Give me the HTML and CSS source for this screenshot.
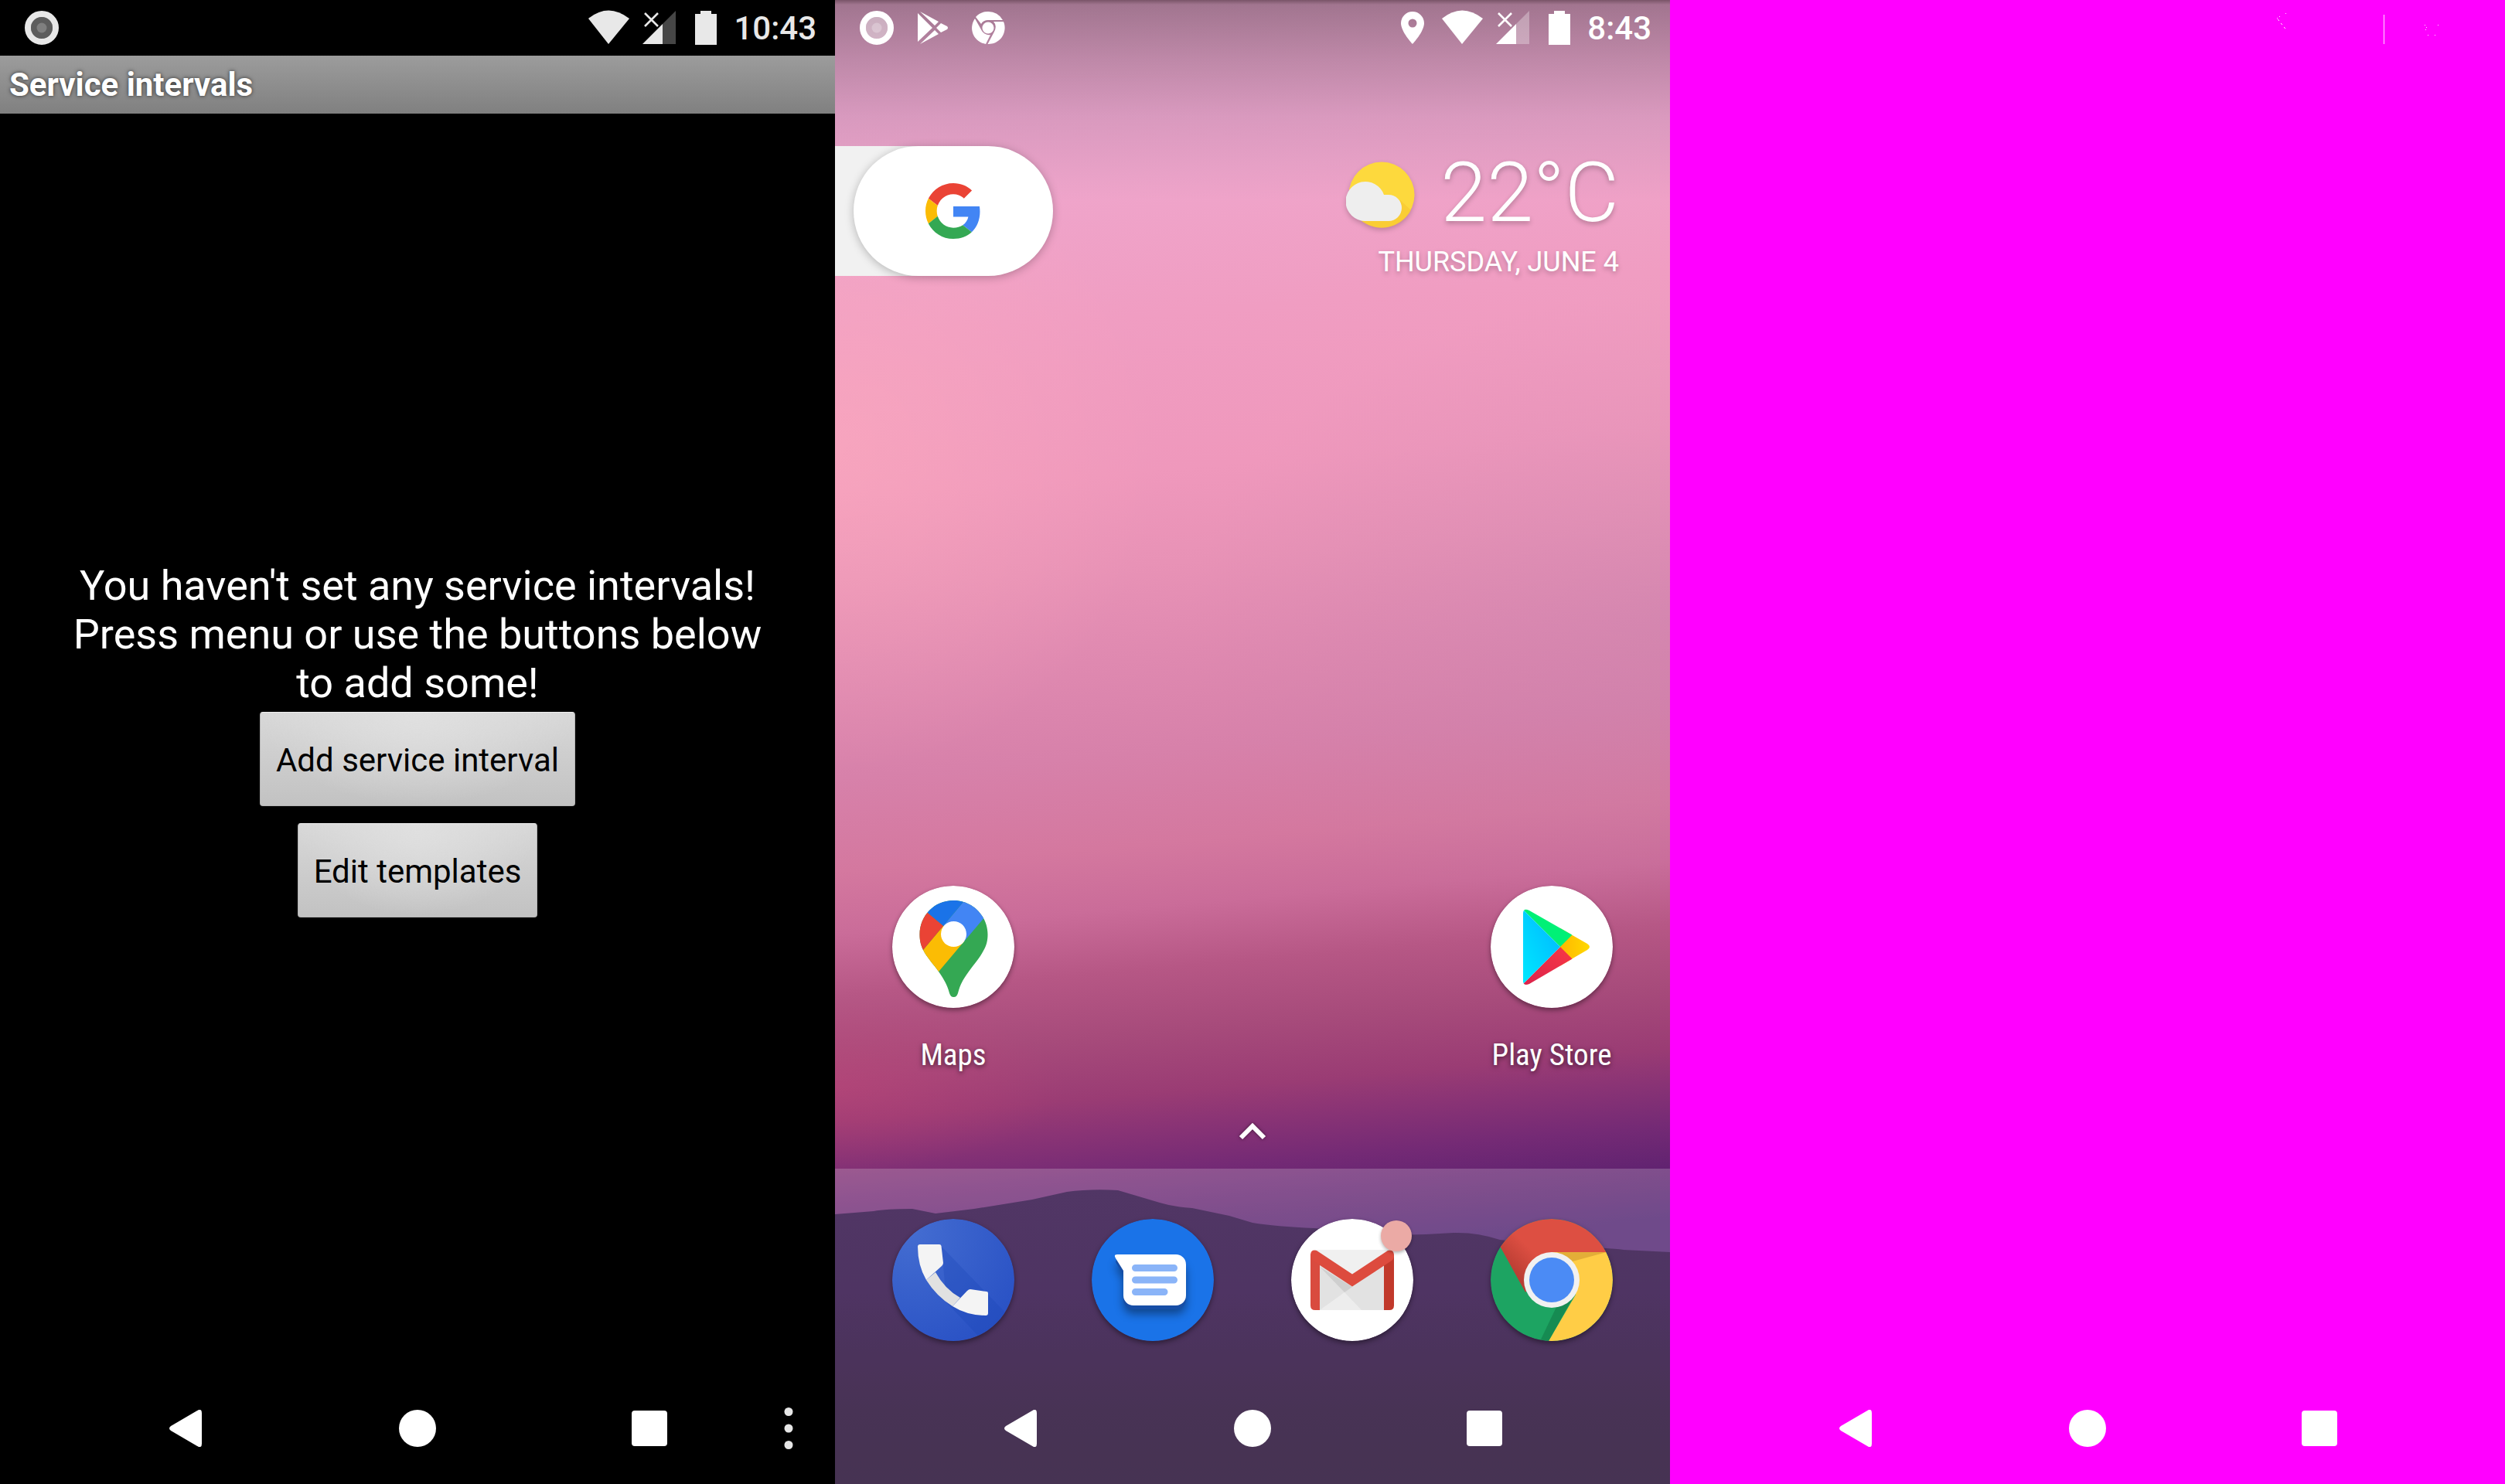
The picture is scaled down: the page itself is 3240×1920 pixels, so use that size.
FILE: index.html
```html
<!DOCTYPE html>
<html lang="en">
<head>
<meta charset="utf-8">
<title>Service intervals</title>
<link rel="stylesheet" href="styles.css">
</head>
<body>
<svg class="defs" aria-hidden="true">
  <defs>
    <symbol id="wifi" viewBox="0 0 54 48"><path d="M0 12Q26 -9 53 12L26 45Z"/></symbol>
    <symbol id="signal" viewBox="0 0 48 48"><path d="M43 2V45H26V19Z" opacity=".3"/><path d="M0 45L26 19V45Z"/><path d="M3 5L20 22M20 5L3 22" stroke="currentColor" stroke-width="2.6" fill="none"/></symbol>
    <symbol id="battery" viewBox="0 0 36 48"><path d="M11 2H25V6H32V46H4V6H11Z"/></symbol>
    <symbol id="record" viewBox="0 0 48 48"><circle cx="24" cy="24" r="18" fill="none" stroke="currentColor" stroke-width="8"/><circle cx="24" cy="24" r="14" opacity=".4"/><circle cx="24" cy="24" r="6.500" class="record-core"/></symbol>
    <symbol id="back" viewBox="0 0 48 48"><path d="M41 0Q45 -1 45 4V44Q45 49 41 48L5 27Q1 24 5 21Z"/></symbol>
    <symbol id="home" viewBox="0 0 48 48"><circle cx="24" cy="24" r="24"/></symbol>
    <symbol id="recents" viewBox="0 0 48 48"><rect x="1" y="1" width="46" height="46" rx="4"/></symbol>
  </defs>
</svg>
<main class="screens">

  <section class="phone app">
    <header class="status">
      <svg class="i48"><use href="#record"/></svg>
      <div class="status-right">
        <svg class="i54"><use href="#wifi"/></svg>
        <svg class="i48"><use href="#signal"/></svg>
        <svg class="i36"><use href="#battery"/></svg>
        <time>10:43</time>
      </div>
    </header>
    <h1 class="title">Service intervals</h1>
    <div class="empty">
      <p>You haven't set any service intervals! Press menu or use the buttons below to add some!</p>
      <div class="actions">
        <button class="btn">Add service interval</button>
        <button class="btn">Edit templates</button>
      </div>
    </div>
    <nav class="nav">
      <button aria-label="Back"><svg class="i48"><use href="#back"/></svg></button>
      <button aria-label="Home"><svg class="i48"><use href="#home"/></svg></button>
      <button aria-label="Recents"><svg class="i48"><use href="#recents"/></svg></button>
      <button class="more" aria-label="Menu"><svg viewBox="0 0 12 54"><circle cx="6" cy="5.500" r="5.500"/><circle cx="6" cy="27" r="5.500"/><circle cx="6" cy="48.500" r="5.500"/></svg></button>
    </nav>
  </section>

  <section class="phone launcher">
    <svg class="hills" viewBox="0 0 1080 390" preserveAspectRatio="none" aria-hidden="true">
      <defs><linearGradient id="hill" x2="0" y2="1"><stop offset="0" stop-color="#26043f"/><stop offset=".35" stop-color="#23023c"/><stop offset=".75" stop-color="#1b002b"/><stop offset="1" stop-color="#180028"/></linearGradient></defs>
      <path fill="url(#hill)" d="M0 41L50 37Q65 34 100 34L130 40L180 34L255 22L300 12Q330 8 366 10L420 26Q440 32 462 33L510 43L540 52Q570 57 620 59L720 68Q760 68 800 65Q830 64 860 74L950 84Q1000 84 1020 87L1080 90V390H0Z"/>
    </svg>
    <header class="status">
      <svg class="i48"><use href="#record"/></svg>
      <svg class="i48" viewBox="0 0 48 48"><path d="M5 5V42L24 24ZM8 3L27 21L32 16ZM8 45L27 27L32 32ZM35 18L29 24L35 30L43 26Q45 24 43 22Z"/></svg>
      <svg class="i48" viewBox="0 0 48 48"><path d="M24 3A21 21 0 0 1 43 14H24A10 10 0 0 0 15 19L8 10A21 21 0 0 1 24 3ZM44 16A21 21 0 0 1 23.500 45L32 29Q36 21 31 16ZM7 12L16 28Q20 34 27 33L21 45A21 21 0 0 1 7 12Z"/><circle cx="24" cy="24" r="7.500"/></svg>
      <div class="status-right">
        <svg class="i44" viewBox="0 0 44 48"><path fill-rule="evenodd" d="M22 3A15 15 0 0 0 7 18C7 29 22 45 22 45S37 29 37 18A15 15 0 0 0 22 3ZM22 12.500A5.500 5.500 0 1 1 22 23.500A5.500 5.500 0 1 1 22 12.500Z"/></svg>
        <svg class="i54"><use href="#wifi"/></svg>
        <svg class="i48"><use href="#signal"/></svg>
        <svg class="i36"><use href="#battery"/></svg>
        <time>8:43</time>
      </div>
    </header>

    <div class="widgets">
      <div class="search">
        <button class="pill" aria-label="Google search">
          <svg viewBox="0 0 48 48"><path fill="#4285f4" d="M46.980 24.550c0-1.570-.15-3.090-.38-4.550H24v9.020h12.940c-.58 2.960-2.260 5.480-4.780 7.180l7.730 6c4.510-4.180 7.090-10.360 7.090-17.650z"/><path fill="#ea4335" d="M24 9.500c3.540 0 6.710 1.220 9.210 3.600l6.850-6.850C35.900 2.380 30.470 0 24 0 14.620 0 6.510 5.380 2.560 13.220l7.980 6.190C12.430 13.720 17.740 9.500 24 9.500z"/><path fill="#fbbc05" d="M10.530 28.590c-.48-1.450-.76-2.990-.76-4.590s.27-3.140.76-4.590l-7.980-6.190C.92 16.460 0 20.120 0 24c0 3.880.92 7.540 2.560 10.780l7.970-6.190z"/><path fill="#34a853" d="M24 48c6.480 0 11.930-2.130 15.890-5.810l-7.730-6c-2.150 1.450-4.920 2.300-8.160 2.300-6.260 0-11.570-4.220-13.470-9.910l-7.980 6.190C6.510 42.620 14.620 48 24 48z"/></svg>
        </button>
      </div>
      <div class="weather">
        <div class="temp">
          <svg viewBox="0 0 92 92" aria-hidden="true"><circle cx="46" cy="49" r="42.500" fill="#fdd93d"/><path d="M70 56L84 69A43 43 0 0 1 20 83L58 81Z" fill="#f9c52f" opacity=".6"/><path fill="#eee" d="M24 83A25.500 25.500 0 1 1 49 49H55A17 17 0 0 1 55 83Z"/></svg>
          <span>22°C</span>
        </div>
        <div class="date">THURSDAY, JUNE 4</div>
      </div>
    </div>

    <div class="icons shortcuts">
      <a class="shortcut" href="#maps">
        <svg class="icon" viewBox="0 0 158 158"><defs><clipPath id="pin"><path d="M79.500 19C54 19 35.500 39 35.500 63C35.500 72 37.500 78 40 83C45 93 53 101 60 111C67 121 71 128 74 139C75 142 76.500 144 79.500 144S84 142 85 139C88 127 92 121 99 111C106 101 113 94 118 84C122 77 123.500 71 123.500 63C123.500 39 104 19 79.500 19Z"/></clipPath></defs><circle cx="79" cy="79" r="79" fill="#fff"/><g clip-path="url(#pin)"><path fill="#34a853" d="M0 0H158V158H0Z"/><path fill="#fbbc04" d="M30 95L66 52L79 62L93 72L50 123Z"/><path fill="#4285f4" d="M101 10L66 52L79 62L93 72L126 33L115 10Z"/><path fill="#1a73e8" d="M28 20L66 52L101 10H30Z"/><path fill="#ea4335" d="M28 20L66 52L30 95L20 95Z"/></g><circle cx="79.500" cy="62.500" r="16.500" fill="#fff"/></svg>
        <span>Maps</span>
      </a>
      <a class="shortcut last" href="#play">
        <svg class="icon" viewBox="0 0 158 158"><defs><linearGradient id="cyan" x1="1" x2="0" y2="1"><stop stop-color="#00b4ff"/><stop offset="1" stop-color="#00eaff"/></linearGradient><linearGradient id="amber"><stop stop-color="#ffb700"/><stop offset="1" stop-color="#ffdc00"/></linearGradient><linearGradient id="ruby" x1="1" x2="0" y2="1"><stop stop-color="#ff3a44"/><stop offset="1" stop-color="#d31f4d"/></linearGradient><clipPath id="tri"><path d="M42 36Q42 28 50 32L125 75Q131 79 125 83L50 127Q42 130 42 123Z"/></clipPath></defs><circle cx="79" cy="79" r="79" fill="#fff"/><g clip-path="url(#tri)"><path fill="url(#amber)" d="M90 40H132V118H90Z"/><path fill="#00f076" d="M40 29L90 79L130 39L60 10Z"/><path fill="url(#ruby)" d="M40 129L90 79L130 119L60 148Z"/><path fill="url(#cyan)" d="M40 29L90 79L40 129Z"/></g></svg>
        <span>Play Store</span>
      </a>
    </div>
    <button class="drawer" aria-label="All apps"><svg viewBox="0 0 40 28"><path d="M5 22L20 7L35 22"/></svg></button>

    <footer class="hotseat">
      <div class="icons dock">
        <button aria-label="Phone"><svg class="icon" viewBox="0 0 158 158"><defs><radialGradient id="ph" cx=".15" cy=".1" r="1.100"><stop stop-color="#446dd1"/><stop offset="1" stop-color="#2850c4"/></radialGradient></defs><circle cx="79" cy="79" r="79" fill="url(#ph)"/><path d="M64 36L146 121A79 79 0 0 1 111 151L70 108Z" fill="#1c45b5" opacity=".3"/><path fill="#e1e1e1" d="M56 69Q68 91 88 102L78 113Q57 100 44 79Z"/><path fill="#f4f4f4" d="M33 36Q33 33 36 33H61Q63 33 63.500 35L66 57Q66 59 64 61L44 79Q33 60 33 36ZM78 113L97 93Q99 91 101 91L122 94Q124 94 124 96V122Q124 125 121 125Q97 125 78 113Z"/></svg></button>
        <button aria-label="Messages"><svg class="icon" viewBox="0 0 158 158"><circle cx="79" cy="79" r="79" fill="#1a73e8"/><path class="bubble-shadow" fill="#174ea6" d="M32 52H109A13 13 0 0 1 122 65V104A13 13 0 0 1 109 117H54A13 13 0 0 1 41 104V73L31 56Z"/><path fill="#fff" d="M33 46H109A13 13 0 0 1 122 59V99A13 13 0 0 1 109 112H54A13 13 0 0 1 41 99V67L31 51Q28 46 33 46Z"/><path d="M56.500 63.500H106.500M56.500 79H106.500M56.500 94.500H94" stroke="#8ab4f8" stroke-width="9" stroke-linecap="round"/></svg></button>
        <button aria-label="Gmail, new mail"><svg class="icon" viewBox="0 0 158 158"><circle cx="79" cy="79" r="79" fill="#fff"/><path fill="#e2e2e2" d="M31 40H126V118H31Z"/><path fill="#f0f0f0" d="M31 40H126L79 74Z"/><path fill="#cfcfcf" d="M37 62L79 88L69 95Z"/><path fill="#ededed" d="M37 118L69 95L91 118Z"/><path fill="#d94b3f" d="M25 46L37 56V118H31Q25 118 25 112Z"/><path fill="#c1392b" d="M133 46L120 56V118H127Q133 118 133 112Z"/><path fill="#dd4b3e" d="M25 46Q26 39 33 41L79 71.500L125 41Q132 39 133 46Q133 52 130 54L79 87.500L28 54Q25 52 25 46Z"/></svg><i class="badge"></i></button>
        <button aria-label="Chrome"><svg class="icon" viewBox="0 0 158 158"><defs><clipPath id="disc"><circle cx="79" cy="79" r="79"/></clipPath><linearGradient id="cr" x1=".35" x2=".1" y1=".45" y2=".6"><stop stop-color="#dd4f42"/><stop offset="1" stop-color="#b93d33"/></linearGradient></defs><g clip-path="url(#disc)"><path fill="#1da462" d="M0 0H158V158H0Z"/><path fill="url(#cr)" d="M13 37L0 14V0H158V43H79L45 95Z"/><path fill="#ffcd46" d="M79 43H158V158H75L110 98Z"/><path fill="#e3ae38" d="M86 43H150L106 55Z"/><path fill="#14804c" d="M108 99L75 158H64L85 114Z" opacity=".7"/></g><circle cx="79" cy="79" r="36" fill="#f1f1f1"/><circle cx="79" cy="79" r="29" fill="#4b8bf5"/></svg></button>
      </div>
      <nav class="nav">
        <button aria-label="Back"><svg class="i48"><use href="#back"/></svg></button>
        <button aria-label="Home"><svg class="i48"><use href="#home"/></svg></button>
        <button aria-label="Recents"><svg class="i48"><use href="#recents"/></svg></button>
      </nav>
    </footer>
  </section>

  <section class="phone blank">
    <header class="status">
      <svg class="specks" viewBox="0 0 216 72" shape-rendering="crispEdges" aria-hidden="true"><path d="M16 17h1v1h-1zM8 21h1v1h-1zM5 23h1v1h-1zM6 25h1v1h-1zM7 26h1v1h-1zM10 30h1v1h-1zM11 31h1v1h-1zM14 35h1v1h-1zM15 36h1v1h-1zM143 19h1v38h-1zM196 32h1v1h-1zM198 35h1v1h-1zM197 38h1v1h-1zM200 45h1v1h-1zM209 45h1v1h-1zM213 32h1v1h-1z"/></svg>
    </header>
    <nav class="nav">
      <button aria-label="Back"><svg class="i48"><use href="#back"/></svg></button>
      <button aria-label="Home"><svg class="i48"><use href="#home"/></svg></button>
      <button aria-label="Recents"><svg class="i48"><use href="#recents"/></svg></button>
    </nav>
  </section>

</main>
</body>
</html>
```
FILE: styles.css
```css
* { box-sizing: border-box; }
body { margin: 0; background: #000; font-family: Roboto, sans-serif; color: #fff; }
svg { display: block; fill: currentColor; flex: none; }
button { border: 0; padding: 0; background: none; color: inherit; font: inherit; }
a { color: inherit; text-decoration: none; }

.defs { position: absolute; width: 0; height: 0; }
.screens { display: grid; grid-template-columns: repeat(3, 1fr); min-height: 100vh; }
.phone { position: relative; display: flex; flex-direction: column; }

.i36 { width: 36px; height: 48px; }
.i44 { width: 44px; height: 48px; }
.i48 { width: 48px; height: 48px; }
.i54 { width: 54px; height: 48px; }

/* Status bar */
.status { display: flex; align-items: center; gap: 24px; height: 72px; padding: 0 24px 0 30px; flex: none; }
.status-right { display: flex; align-items: center; gap: 16px; margin-left: auto; }
.status time { padding: 2px 0 0 2px; font-size: 42px; font-weight: 500; line-height: 48px; }

/* Navigation bar */
.nav { position: relative; display: flex; align-items: center; justify-content: center; gap: 252px; height: 144px; flex: none; margin-top: auto; }
.more { position: absolute; right: 54px; color: #e6e6e6; }
.more svg { width: 12px; height: 54px; }

/* Service intervals app */
.app { background: #000; }
.app .status { color: #e8e8e8; }
.record-core { opacity: .25; }
.app .record-core { fill: #000; opacity: .5; }
.title { margin: 0; padding: 0 12px; height: 75px; line-height: 75px; font-size: 42px; font-weight: 700; background: linear-gradient(#9c9c9c, #808080); text-shadow: 0 0 5px rgba(0, 0, 0, .7); }
.empty { flex: 1; display: flex; flex-direction: column; align-items: center; justify-content: center; padding: 0 72px; text-align: center; }
.empty p { margin: 0; font-size: 54px; line-height: 63px; }
.actions { display: flex; flex-direction: column; align-items: center; gap: 22px; padding: 6px 0 10px; }
.btn { height: 122px; padding: 2px 20px 0; font-size: 42px; color: #000; border: 1px solid #b4b4b4; border-top-color: #f0f0f0; border-radius: 4px; background: radial-gradient(ellipse at 50% 0, #e0e0e0, rgba(214, 214, 214, 0) 70%), linear-gradient(#d8d8d8, #c2c2c2); }

/* Launcher */
.launcher { background:
  linear-gradient(rgba(60, 40, 50, .65), rgba(60, 50, 60, .42) 6px, rgba(70, 60, 75, .28) 76px, rgba(90, 80, 110, .14) 150px, transparent 260px),
  radial-gradient(ellipse 420px 420px at 0 580px, rgba(255, 175, 190, .5), rgba(255, 175, 190, .2) 55%, transparent),
  radial-gradient(ellipse 620px 420px at 1080px 800px, rgba(190, 130, 175, .3), transparent),
  radial-gradient(ellipse 300px 110px at 0 1405px, rgba(200, 70, 120, .4), transparent),
  linear-gradient(175deg, #eaa6cc 0, #efa5cb 13%, #f09dc2 22%, #ef98bc 32%, #e892b6 38%, #df89b0 44%, #d781aa 50%, #d4789f 56%, #ca6c99 60%, #b65785 64%, #a74b7b 68%, #9a3c74 72%, #8b3475 74%, #742a75 77%, #5f2270 80%, #4b1d6d 83%); }
.hills { position: absolute; left: 0; bottom: 0; width: 100%; height: 390px; }
.launcher .status, .launcher .widgets, .icons, .hotseat { position: relative; }
.widgets { display: flex; justify-content: space-between; padding: 117px 66px 0 0; }
.search { height: 168px; padding-left: 24px; background: linear-gradient(#f1f1f1, #f1f1f1) 0 0 / 110px 100% no-repeat; }
.pill { display: flex; align-items: center; justify-content: center; width: 258px; height: 168px; border-radius: 84px; background: #fff; box-shadow: 0 2px 12px rgba(0, 0, 0, .25); }
.pill svg { width: 72px; height: 72px; }
.weather { text-align: right; text-shadow: 0 3px 6px rgba(0, 0, 0, .25); }
.temp { display: flex; align-items: center; justify-content: flex-end; gap: 30px; font-size: 108px; font-weight: 300; line-height: 120px; }
.temp svg { width: 92px; height: 92px; filter: drop-shadow(0 3px 3px rgba(0, 0, 0, .2)); }
.date { margin-top: 6px; font-size: 36px; line-height: 48px; }

.icons { display: grid; grid-template-columns: repeat(4, 1fr); justify-items: center; padding: 0 24px; }
.icon { width: 158px; height: 158px; border-radius: 50%; box-shadow: 0 3px 6px rgba(0, 0, 0, .4); }
.shortcuts { margin-top: auto; }
.shortcut { display: flex; flex-direction: column; align-items: center; gap: 36px; font-family: "Roboto Condensed", Roboto, sans-serif; font-size: 39px; line-height: 50px; text-shadow: 0 2px 6px rgba(0, 0, 0, .6); white-space: nowrap; }
.last { grid-column: 4; }
.drawer { position: relative; display: flex; align-items: center; justify-content: center; align-self: center; width: 120px; height: 96px; margin-top: 26px; }
.drawer svg { width: 40px; height: 28px; fill: none; stroke: #fff; stroke-width: 6px; filter: drop-shadow(0 0 2px rgba(0, 0, 0, .5)); }

.hotseat { background: rgba(255, 255, 255, .2); }
.dock { padding-top: 65px; padding-bottom: 41px; }
.dock button { position: relative; }
.bubble-shadow { filter: drop-shadow(0 6px 6px rgba(0, 0, 0, .4)); }
.badge { position: absolute; top: 2px; right: 2px; width: 40px; height: 40px; border-radius: 50%; background: #ebaaa5; box-shadow: 0 2px 4px rgba(0, 0, 0, .3); }

/* Blank screen */
.blank { background: #f0f; }
.blank .status { padding-right: 84px; }
.specks { width: 216px; height: 72px; margin-left: auto; fill: #ffe0ff; }
```
